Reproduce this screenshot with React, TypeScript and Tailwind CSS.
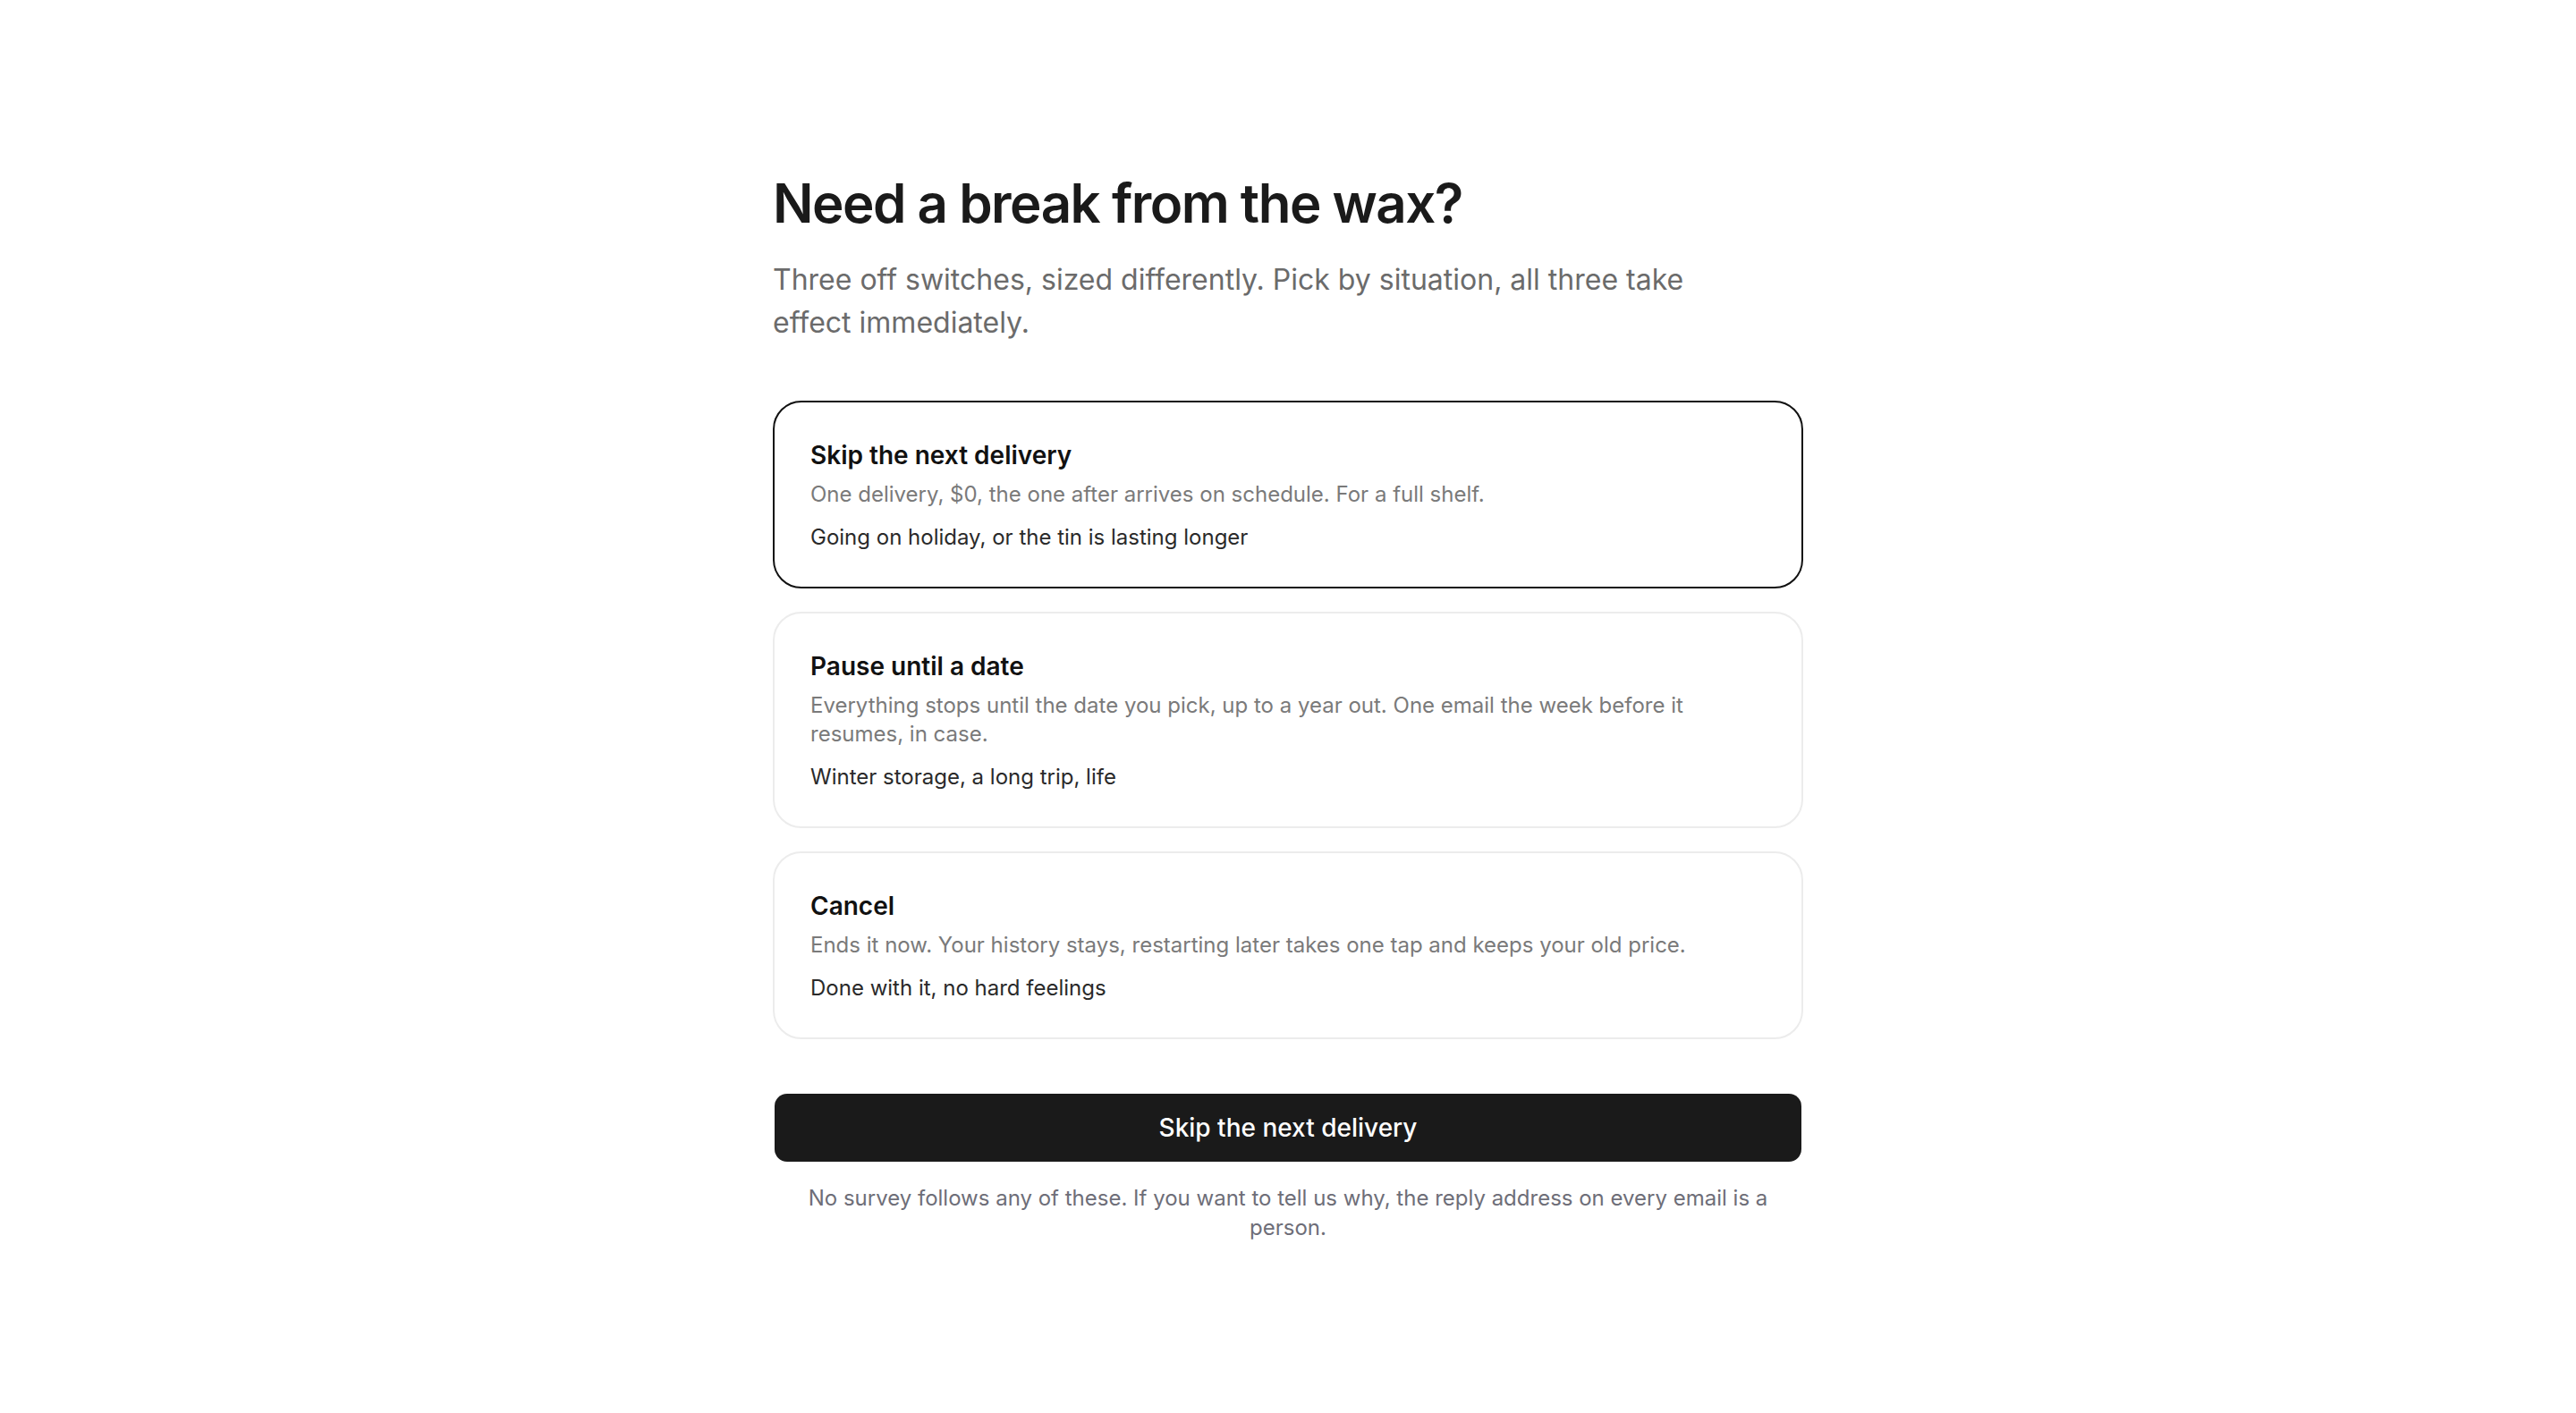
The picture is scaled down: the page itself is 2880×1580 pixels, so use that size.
import { useState } from "react";

type Option = {
  id: string;
  title: string;
  body: string;
  when: string;
  cta: string;
};

const options: Option[] = [
  {
    id: "skip",
    title: "Skip the next delivery",
    body: "One delivery, $0, the one after arrives on schedule. For a full shelf.",
    when: "Going on holiday, or the tin is lasting longer",
    cta: "Skip the next delivery",
  },
  {
    id: "pause",
    title: "Pause until a date",
    body: "Everything stops until the date you pick, up to a year out. One email the week before it resumes, in case.",
    when: "Winter storage, a long trip, life",
    cta: "Pause until a date",
  },
  {
    id: "cancel",
    title: "Cancel",
    body: "Ends it now. Your history stays, restarting later takes one tap and keeps your old price.",
    when: "Done with it, no hard feelings",
    cta: "Cancel",
  },
];

export default function App() {
  const [selected, setSelected] = useState<string>("skip");
  const current = options.find((o) => o.id === selected) ?? options[0];

  return (
    <div
      className="min-h-screen w-full bg-white flex items-center justify-center"
      style={{ fontFamily: "Inter, 'Noto Sans', sans-serif" }}
    >
      <div className="w-[1152px] flex flex-col">
        <h1 className="text-[60px] leading-[72px] font-semibold tracking-[-1.5px] text-[#1a1a1a]">
          Need a break from the wax?
        </h1>
        <p className="mt-[26px] max-w-[1024px] text-[32px] leading-[48px] text-[#6b6b6b]">
          Three off switches, sized differently. Pick by situation, all three
          take effect immediately.
        </p>

        <div className="mt-[63px] flex flex-col gap-[26px]">
          {options.map((o) => (
            <button
              key={o.id}
              type="button"
              onClick={() => setSelected(o.id)}
              className={`text-left rounded-[32px] border-2 bg-white px-10 py-[39px] ${
                selected === o.id ? "border-[#111111]" : "border-[#ececec]"
              }`}
            >
              <div className="text-[28px] leading-[40px] font-semibold text-[#111111]">
                {o.title}
              </div>
              <div className="mt-2 text-[24px] leading-[32px] text-[#7a7a7a]">
                {o.body}
              </div>
              <div className="mt-4 text-[24px] leading-[32px] text-[#2a2a2a]">
                {o.when}
              </div>
            </button>
          ))}
        </div>

        <button
          type="button"
          className="mt-[61px] mx-[2px] h-[76px] rounded-[14px] bg-[#1a1a1a] text-white text-[28px] font-medium"
        >
          {current.cta}
        </button>

        <p className="mt-6 px-8 text-center text-[24px] leading-[33px] text-[#6e6e78]">
          No survey follows any of these. If you want to tell us why, the reply
          address on every email is a person.
        </p>
      </div>
    </div>
  );
}
